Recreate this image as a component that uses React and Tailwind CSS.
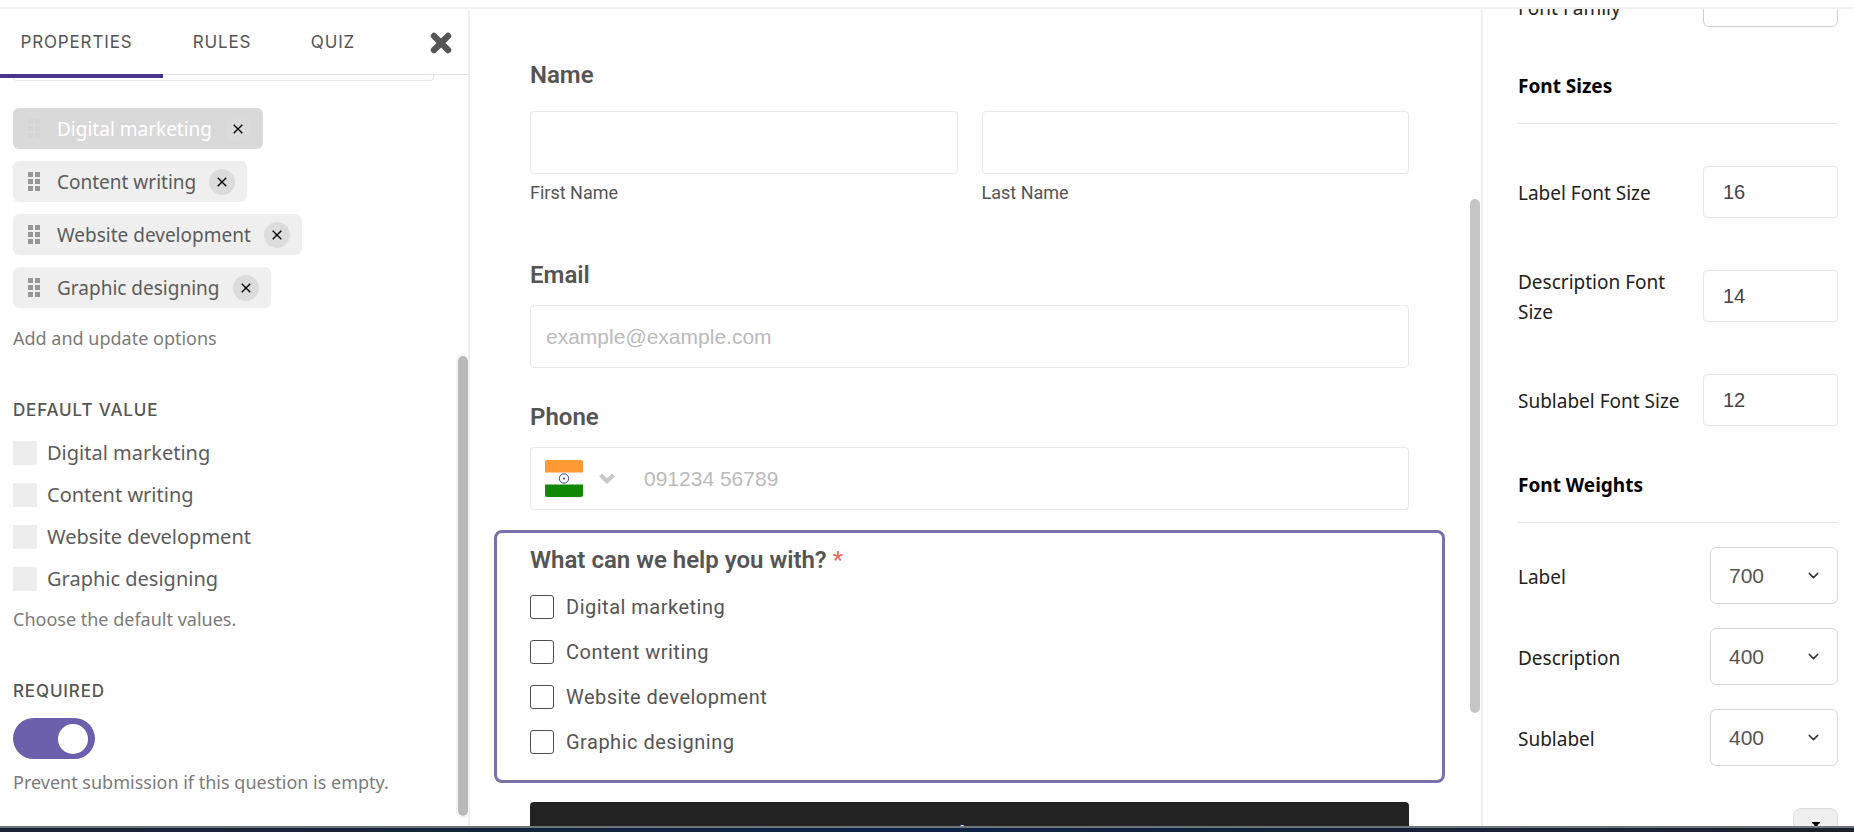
import { ChevronDown } from "lucide-react";

const SERVICES = [
  { id: "digital", label: "Digital marketing", dragging: true },
  { id: "content", label: "Content writing" },
  { id: "website", label: "Website development" },
  { id: "graphic", label: "Graphic designing" },
];

function Scrollbar({ className }) {
  return <div aria-hidden="true" className={`absolute rounded-full ${className}`} />;
}

function GripIcon({ className }) {
  return (
    <svg className={className} width="12" height="20" viewBox="0 0 12 20" fill="currentColor" aria-hidden="true">
      <rect x="0" y="0" width="5" height="5" />
      <rect x="7" y="0" width="5" height="5" />
      <rect x="0" y="7" width="5" height="5" />
      <rect x="7" y="7" width="5" height="5" />
      <rect x="0" y="14" width="5" height="5" />
      <rect x="7" y="14" width="5" height="5" />
    </svg>
  );
}

function OptionChip({ label, dragging }) {
  return (
    <li
      className={`flex h-[41px] items-center rounded-md pr-3 pl-[15px] ${
        dragging ? "bg-[#d9d9d9] text-white" : "bg-[#efefef] text-[#5c5c5c]"
      }`}
    >
      <GripIcon className={dragging ? "text-[#d5d5d5]" : "text-[#979797]"} />
      <span className="ml-[17px] text-[19px] leading-7">{label}</span>
      <button
        type="button"
        aria-label={`Remove ${label}`}
        className={`ml-[13px] flex size-[26px] items-center justify-center rounded-full text-black ${
          dragging ? "bg-[#dbdbdb]" : "bg-[#dcdcdc]"
        }`}
      >
        <svg width="10" height="10" viewBox="0 0 10 10" fill="none" stroke="currentColor" strokeWidth="1.4" aria-hidden="true">
          <path d="M0.7 0.7 9.3 9.3M9.3 0.7 0.7 9.3" />
        </svg>
      </button>
    </li>
  );
}

const capsLabel = "font-['Inter',sans-serif] text-[17px] leading-5 font-medium tracking-wider text-[#555] uppercase";

function PropertiesPanel() {
  return (
    <aside className="relative flex w-[470px] shrink-0 flex-col overflow-hidden border-r-2 border-[#efefef] font-['Noto_Sans','Open_Sans',sans-serif]">
      <nav className="relative z-10 flex h-[66px] shrink-0 border-b border-[#e2e2e2] bg-white font-['Inter',sans-serif] text-[17px] tracking-wider text-[#555]">
        <button type="button" className="h-[69px] w-[163px] border-b-4 border-[#4b3190] pt-[2px] pr-[10px] uppercase">
          Properties
        </button>
        <button type="button" className="w-[118px] pt-[2px] uppercase">Rules</button>
        <button type="button" className="w-[104px] pt-[2px] uppercase">Quiz</button>
        <button type="button" aria-label="Close panel" className="mr-4 ml-auto flex items-center pt-[3px] text-[#555]">
          <svg width="22" height="22" viewBox="0 0 22 22" fill="none" stroke="currentColor" strokeWidth="6.4" aria-hidden="true">
            <path d="M4 4 18 18M18 4 4 18" strokeLinecap="round" />
          </svg>
        </button>
      </nav>

      <div className="px-[13px]">
        <div className="mr-[21px] h-[6px] rounded-b border-x border-b border-[#e9e9e9]" />
        <ul className="mt-[27px] flex flex-col items-start gap-3">
          {SERVICES.map((s) => (
            <OptionChip key={s.id} label={s.label} dragging={s.dragging} />
          ))}
        </ul>
        <p className="mt-4 text-lg leading-7 text-[#7b7b7b]">Add and update options</p>

        <fieldset className="mt-12">
          <legend className={capsLabel}>Default value</legend>
          <div className="mt-[21px] flex flex-col gap-[18px]">
            {SERVICES.map((s) => (
              <label key={s.id} className="flex h-6 items-center gap-[10px] text-xl leading-6 text-[#5c5c5c]">
                <input type="checkbox" className="size-6 appearance-none bg-[#ededed] checked:bg-[#6c5fab]" />
                {s.label}
              </label>
            ))}
          </div>
          <p className="mt-[14px] text-lg leading-7 text-[#7b7b7b]">Choose the default values.</p>
        </fieldset>

        <label htmlFor="required" className={`mt-12 block ${capsLabel}`}>
          Required
        </label>
        <input
          id="required"
          type="checkbox"
          role="switch"
          defaultChecked
          className="mt-[17px] flex h-[41px] w-[82px] appearance-none items-center rounded-full bg-[#cccccc] px-[7px] before:size-[30px] before:rounded-full before:bg-white checked:justify-end checked:bg-[#6c5fab]"
        />
        <p className="mt-[9px] text-lg leading-7 text-[#7b7b7b]">Prevent submission if this question is empty.</p>
      </div>

      <Scrollbar className="top-[347px] right-0 bottom-[10px] w-[10px] bg-[#b9b9b9] outline-2 outline-[#f1f1f1]" />
    </aside>
  );
}

const fieldBox = "h-[63px] w-full rounded border border-[#e9e9e9] bg-white";
const fieldLabel = "block text-2xl leading-8 font-semibold text-[#555]";

function IndiaFlag() {
  return (
    <svg width="38" height="37" viewBox="0 0 38 37" aria-hidden="true">
      <path d="M2 0h34a2 2 0 0 1 2 2v10.500H0V2a2 2 0 0 1 2-2z" fill="#ff9933" />
      <path d="M0 24.500h38V35a2 2 0 0 1-2 2H2a2 2 0 0 1-2-2z" fill="#128807" />
      <circle cx="19" cy="18.500" r="4.700" fill="none" stroke="#2c2c9a" strokeWidth="0.900" />
      <circle cx="19" cy="18.500" r="1" fill="#2c2c9a" />
    </svg>
  );
}

function FormPreview() {
  return (
    <main className="relative min-w-0 flex-1 overflow-hidden bg-[#fefefe] font-['Roboto',sans-serif] text-[#555]">
      <form className="pt-[50px] pr-[72px] pl-[60px]">
        <fieldset>
          <legend className={fieldLabel}>Name</legend>
          <div className="mt-5 grid grid-cols-2 gap-6">
            <div>
              <input id="first" type="text" className={fieldBox} />
              <label htmlFor="first" className="mt-[7px] block text-lg leading-6">First Name</label>
            </div>
            <div>
              <input id="last" type="text" className={fieldBox} />
              <label htmlFor="last" className="mt-[7px] block text-lg leading-6">Last Name</label>
            </div>
          </div>
        </fieldset>

        <label htmlFor="email" className={`mt-[54px] ${fieldLabel}`}>Email</label>
        <input
          id="email"
          type="email"
          placeholder="example@example.com"
          className={`mt-[14px] block px-[15px] font-['Liberation_Sans',sans-serif] text-[21px] placeholder:text-[#bababa] ${fieldBox}`}
        />

        <label htmlFor="phone" className={`mt-[33px] ${fieldLabel}`}>Phone</label>
        <div className={`mt-[14px] flex items-center pl-[14px] ${fieldBox}`}>
          <button type="button" aria-label="Country: India" className="flex items-center gap-4">
            <IndiaFlag />
            <svg width="16" height="11" viewBox="0 0 16 11" fill="none" stroke="#c8c8c8" strokeWidth="4" aria-hidden="true">
              <path d="M1.500 2 8 8.300 14.500 2" />
            </svg>
          </button>
          <input
            id="phone"
            type="tel"
            placeholder="091234 56789"
            className="ml-[29px] h-full min-w-0 flex-1 bg-transparent font-['Liberation_Sans',sans-serif] text-[21px] outline-none placeholder:text-[#bababa]"
          />
        </div>

        <section className="-mr-9 -ml-9 mt-5 h-[253px] rounded-lg border-3 border-[#7a70aa] px-[33px] pt-[11px]">
          <h2 className={fieldLabel}>
            What can we help you with? <span className="font-normal text-[#e8685d]">*</span>
          </h2>
          <div className="mt-[19px] flex flex-col gap-[21px]">
            {SERVICES.map((s) => (
              <label key={s.id} className="flex h-6 items-center gap-3 text-xl tracking-wide">
                <input type="checkbox" className="size-6 appearance-none rounded-[3px] border border-[#4f4f4f] bg-white checked:bg-[#6c5fab]" />
                {s.label}
              </label>
            ))}
          </div>
        </section>

        <button type="submit" className="mt-[19px] h-[66px] w-full rounded bg-[#222] text-2xl font-medium text-white">
          Submit
        </button>
      </form>
      <Scrollbar className="top-[190px] right-[1px] bottom-[113px] w-[10px] bg-[#c6c6c6]" />
    </main>
  );
}

function SizeRow({ id, label, value }) {
  return (
    <div className="flex h-[52px] items-center justify-between">
      <label htmlFor={id} className="w-[170px] pt-[2px] text-[19px] leading-[30px]">{label}</label>
      <input
        id={id}
        type="text"
        inputMode="numeric"
        defaultValue={value}
        className="h-full w-[135px] rounded-sm border border-[#e9e9e9] px-[19px] font-['Liberation_Sans',sans-serif] text-xl text-[#444]"
      />
    </div>
  );
}

function WeightRow({ id, label, value }) {
  return (
    <div className="flex h-[57px] items-center justify-between">
      <label htmlFor={id} className="pt-[2px] text-[19px] leading-[30px]">{label}</label>
      <div className="grid h-full w-[128px] items-center">
        <select
          id={id}
          defaultValue={value}
          className="col-start-1 row-start-1 h-full appearance-none rounded-md border border-[#d6d6d6] bg-white px-[18px] font-['Liberation_Sans',sans-serif] text-[21px] text-[#555]"
        >
          <option>400</option>
          <option>700</option>
        </select>
        <ChevronDown className="pointer-events-none col-start-1 row-start-1 mr-4 justify-self-end text-[#333]" size={17} />
      </div>
    </div>
  );
}

function SectionTitle({ children }) {
  return <h3 className="border-b border-[#e6e6e6] pb-[22px] text-[19px] leading-[30px] font-bold text-black">{children}</h3>;
}

function StylePanel() {
  return (
    <aside className="w-[373px] shrink-0 overflow-hidden border-l-2 border-[#efefef] bg-[#fefefe] pr-4 pl-[35px] font-['Noto_Sans','Open_Sans',sans-serif] text-[#222]">
      <div className="-mt-[34px] flex h-[52px] items-end justify-between">
        <label htmlFor="family" className="pb-1 text-[19px] leading-[30px]">Font Family</label>
        <select id="family" className="h-full w-[135px] appearance-none rounded-md border border-[#cfcfcf] bg-white">
          <option></option>
        </select>
      </div>

      <div className="mt-[44px]">
        <SectionTitle>Font Sizes</SectionTitle>
      </div>
      <div className="mt-[42px] flex flex-col gap-[52px]">
        <SizeRow id="label-size" label="Label Font Size" value="16" />
        <SizeRow id="desc-size" label="Description Font Size" value="14" />
        <SizeRow id="sub-size" label="Sublabel Font Size" value="12" />
      </div>

      <div className="mt-[44px]">
        <SectionTitle>Font Weights</SectionTitle>
      </div>
      <div className="mt-6 flex flex-col gap-6">
        <WeightRow id="label-weight" label="Label" value="700" />
        <WeightRow id="desc-weight" label="Description" value="400" />
        <WeightRow id="sub-weight" label="Sublabel" value="400" />
      </div>

      <button
        type="button"
        aria-label="Text options"
        className="mt-[42px] ml-auto flex h-[45px] w-[45px] justify-center rounded-lg border border-[#dedede] bg-[#efefef] pt-[13px] text-black"
      >
        <svg width="8" height="16" viewBox="0 0 8 16" fill="currentColor" aria-hidden="true">
          <path d="M0 0h8v1L5.500 3v10L8 15v1H0v-1l2.500-2V3L0 1z" />
        </svg>
      </button>
    </aside>
  );
}

export default function App() {
  return (
    <div className="flex h-screen flex-col overflow-hidden bg-white">
      <div className="h-[9px] shrink-0 border-b-2 border-[#efefef]" />
      <div className="flex min-h-0 flex-1">
        <PropertiesPanel />
        <FormPreview />
        <StylePanel />
      </div>
      <div className="h-[6px] shrink-0 border-t-2 border-[#70757a] bg-linear-to-r from-[#1a2233] via-[#0d2345] to-[#1c1f2b]" />
    </div>
  );
}
